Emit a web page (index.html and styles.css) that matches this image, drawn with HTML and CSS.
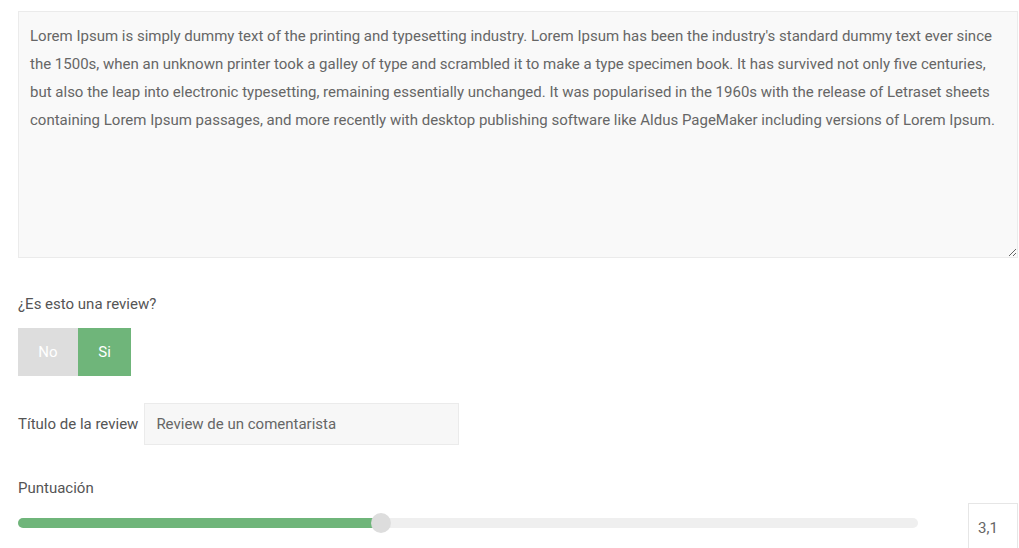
FILE: index.html
```html
<!DOCTYPE html>
<html lang="es">
<head>
    <meta charset="UTF-8">
    <meta name="viewport" content="width=device-width, initial-scale=1.0">
    <title>Review</title>
    <link rel="stylesheet" href="styles.css">
</head>
<body>
    <form class="review-form">
        <textarea class="comment" name="comment">Lorem Ipsum is simply dummy text of the printing and typesetting industry. Lorem Ipsum has been the industry's standard dummy text ever since the 1500s, when an unknown printer took a galley of type and scrambled it to make a type specimen book. It has survived not only five centuries, but also the leap into electronic typesetting, remaining essentially unchanged. It was popularised in the 1960s with the release of Letraset sheets containing Lorem Ipsum passages, and more recently with desktop publishing software like Aldus PageMaker including versions of Lorem Ipsum.</textarea>

        <p class="field-label question">¿Es esto una review?</p>
        <div class="toggle">
            <button type="button" class="toggle-btn toggle-off">No</button>
            <button type="button" class="toggle-btn toggle-on">Si</button>
        </div>

        <div class="title-row">
            <label class="field-label" for="titleField">Título de la review</label>
            <input type="text" id="titleField" class="title-input" value="Review de un comentarista">
        </div>

        <p class="field-label score-label">Puntuación</p>
        <div class="score-row">
            <div class="slider">
                <div class="slider-fill" style="width: 40.3%"></div>
                <span class="slider-thumb" style="left: 40.3%"></span>
            </div>
            <input type="text" class="score-input" value="3,1">
        </div>
    </form>
</body>
</html>
```

FILE: styles.css
```css
body {
    margin: 0;
    background-color: #ffffff;
    font-family: Roboto, "Liberation Sans", sans-serif;
    font-size: 15px;
    color: #555;
}
.review-form {
    width: 1000px;
    margin: 11px 0 0 18px;
}
.comment {
    display: block;
    width: 1000px;
    height: 247px;
    box-sizing: border-box;
    margin: 0;
    padding: 10px 11px;
    border: 1px solid #ebebeb;
    background-color: #f9f9f9;
    font-family: inherit;
    font-size: 15px;
    line-height: 28px;
    color: #666;
    resize: vertical;
    outline: none;
}
.field-label {
    margin: 0;
    line-height: 20px;
    color: #555;
}
.question {
    margin-top: 36px;
}
.toggle {
    display: flex;
    margin-top: 14px;
}
.toggle-btn {
    height: 48px;
    border: none;
    margin: 0;
    font-family: inherit;
    font-size: 15px;
    color: #ffffff;
    cursor: pointer;
}
.toggle-off {
    width: 60px;
    background-color: #dddddd;
}
.toggle-on {
    width: 53px;
    background-color: #6fb57a;
}
.title-row {
    display: flex;
    align-items: center;
    gap: 6px;
    margin-top: 27px;
}
.title-input {
    width: 315px;
    height: 42px;
    box-sizing: border-box;
    padding: 0 11px;
    border: 1px solid #ebebeb;
    background-color: #f7f7f7;
    font-family: inherit;
    font-size: 15px;
    color: #666;
    outline: none;
}
.score-label {
    margin-top: 33px;
}
.score-row {
    display: flex;
    align-items: flex-start;
    gap: 50px;
    margin-top: 5px;
}
.slider {
    position: relative;
    width: 900px;
    height: 10px;
    margin-top: 15px;
    border-radius: 5px;
    background-color: #efefef;
}
.slider-fill {
    height: 100%;
    border-radius: 5px;
    background-color: #6fb57a;
}
.slider-thumb {
    position: absolute;
    top: 50%;
    width: 20px;
    height: 20px;
    margin: -10px 0 0 -10px;
    border-radius: 50%;
    background-color: #dddddd;
}
.score-input {
    width: 50px;
    height: 50px;
    box-sizing: border-box;
    padding: 0 9px;
    border: 1px solid #e6e6e6;
    background-color: #ffffff;
    font-family: inherit;
    font-size: 15px;
    color: #666;
    outline: none;
}
```
